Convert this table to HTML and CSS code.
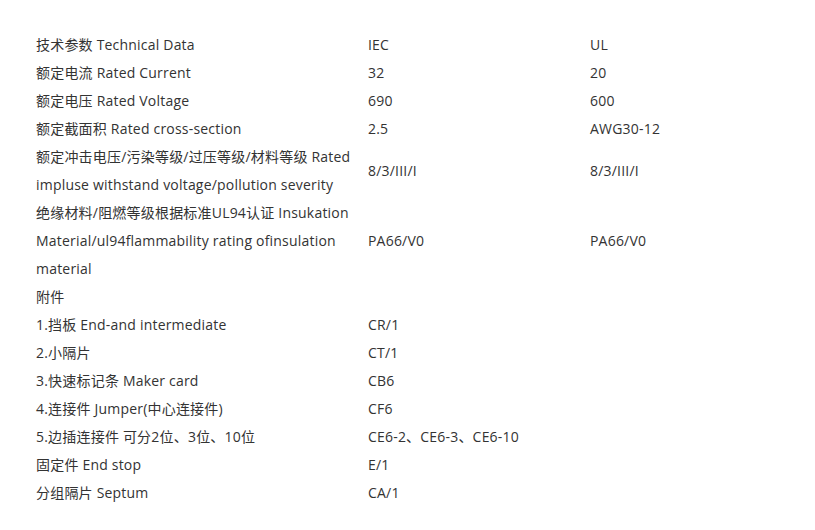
FILE: index.html
```html
<!DOCTYPE html>
<html lang="zh-CN">
<head>
<meta charset="utf-8">
<title>技术参数</title>
<link rel="stylesheet" href="styles.css">
</head>
<body>
<table class="spec">
  <colgroup>
    <col class="c1"><col class="c2"><col class="c3">
  </colgroup>
  <tbody>
    <tr><td>技术参数 Technical Data</td><td>IEC</td><td>UL</td></tr>
    <tr><td>额定电流 Rated Current</td><td>32</td><td>20</td></tr>
    <tr><td>额定电压 Rated Voltage</td><td>690</td><td>600</td></tr>
    <tr><td>额定截面积 Rated cross-section</td><td>2.5</td><td>AWG30-12</td></tr>
    <tr><td>额定冲击电压/污染等级/过压等级/材料等级 Rated<br>impluse withstand voltage/pollution severity</td><td>8/3/III/I</td><td>8/3/III/I</td></tr>
    <tr><td>绝缘材料/阻燃等级根据标准UL94认证 Insukation<br>Material/ul94flammability rating ofinsulation<br>material</td><td>PA66/V0</td><td>PA66/V0</td></tr>
    <tr><td>附件</td><td></td><td></td></tr>
    <tr><td>1.挡板 End-and intermediate</td><td>CR/1</td><td></td></tr>
    <tr><td>2.小隔片</td><td>CT/1</td><td></td></tr>
    <tr><td>3.快速标记条 Maker card</td><td>CB6</td><td></td></tr>
    <tr><td>4.连接件 Jumper(中心连接件)</td><td>CF6</td><td></td></tr>
    <tr><td>5.边插连接件 可分2位、3位、10位</td><td>CE6-2、CE6-3、CE6-10</td><td></td></tr>
    <tr><td>固定件 End stop</td><td>E/1</td><td></td></tr>
    <tr><td>分组隔片 Septum</td><td>CA/1</td><td></td></tr>
  </tbody>
</table>
</body>
</html>
```
FILE: styles.css
```css
html, body {
  margin: 0;
  padding: 0;
  background: #ffffff;
}
body {
  font-family: "Open Sans", "Noto Sans CJK SC", sans-serif;
  font-size: 14px;
  color: #333333;
  letter-spacing: 0.2px;
}
.spec {
  border-collapse: collapse;
  margin: 31px 0 0 36px;
  table-layout: fixed;
  width: 740px;
}
.spec .c1 { width: 332px; }
.spec .c2 { width: 222px; }
.spec .c3 { width: 186px; }
.spec td {
  padding: 0;
  line-height: 28px;
  vertical-align: middle;
  white-space: nowrap;
}
```
